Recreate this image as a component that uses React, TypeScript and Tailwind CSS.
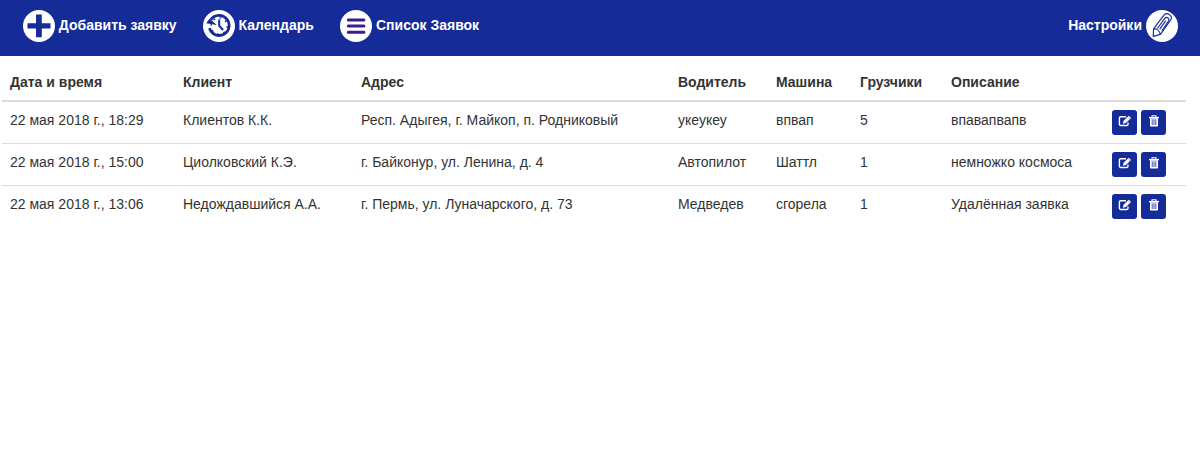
import React from "react";

const BLUE = "#152b98";

function PlusIcon() {
  return (
    <svg width="32" height="32" viewBox="0 0 32 32" className="shrink-0">
      <circle cx="16" cy="16" r="16" fill="#fff" />
      <path d="M13 4.5h5.8v8.7h8.7v5.2h-8.7v8.9H13v-8.9H4.5v-5.2H13z" fill={BLUE} />
    </svg>
  );
}

function HistoryIcon() {
  return (
    <svg width="32" height="32" viewBox="0 0 32 32" className="shrink-0">
      <circle cx="16" cy="16" r="16" fill="#fff" />
      <path d="M8 9.6A10 10 0 1 1 6.5 18.2" fill="none" stroke={BLUE} strokeWidth="2.8" />
      <path d="M3.2 13.2L6.6 8.4l7.2 6.6z" fill={BLUE} />
      <circle cx="16.2" cy="16" r="8.1" fill="none" stroke={BLUE} strokeWidth="1.3" strokeDasharray="2 4.36" />
      <path d="M16.2 9.6v6.2l3.9 4.2" fill="none" stroke={BLUE} strokeWidth="2" />
    </svg>
  );
}

function ListIcon() {
  return (
    <svg width="32" height="32" viewBox="0 0 32 32" className="shrink-0">
      <circle cx="16" cy="16" r="16" fill="#fff" />
      <path d="M8.3 10.1h15.6M8.3 16.1h15.6M8.3 22.2h15.6" stroke="#3b1c94" strokeWidth="3" strokeLinecap="round" />
    </svg>
  );
}

function ClipIcon() {
  return (
    <svg width="32" height="32" viewBox="0 0 32 32" className="shrink-0">
      <circle cx="16" cy="16" r="16" fill="#fff" />
      <g fill="none" stroke={BLUE} strokeWidth="1.15" strokeLinecap="round" strokeLinejoin="round">
        <path d="M11.8 13.2l6.4-8.4c2.9-3.2 9 1 6.5 5.2L14.4 24.4l-7.2 2 .4-7.6 4.2-5.6" />
        <path d="M7.7 18.9c3.1-.4 5.9 1.8 6.6 5.4" />
        <path d="M16.2 20.3l6.3-9.2c1.5-2.7-2-5-3.9-2.5l-6.9 9.4" />
        <path d="M13.9 18.9l5.6-7.8" />
      </g>
    </svg>
  );
}

function EditIcon() {
  return (
    <svg width="14" height="12" viewBox="0 0 14 12">
      <path d="M8 1.7H2.7a1.3 1.3 0 0 0-1.3 1.3v6.2a1.3 1.3 0 0 0 1.3 1.3h6a1.3 1.3 0 0 0 1.3-1.3V7.6" fill="none" stroke="#fff" strokeWidth="1.4" />
      <path d="M4.8 8.8l.8-3L10.7.8l2.4 2.3-5.2 5z" fill="#fff" />
      <path d="M9.7 1.9l2.3 2.3" stroke={BLUE} strokeWidth=".35" />
    </svg>
  );
}

function TrashIcon() {
  return (
    <svg width="12" height="12" viewBox="0 0 12 12">
      <path d="M4 2V.8h4V2" fill="none" stroke="#fff" strokeWidth="1.1" />
      <path d="M1 1.9h10v1.4H1z" fill="#fff" />
      <path d="M2 3.3h8v7.4a.7.7 0 0 1-.7.7H2.7a.7.7 0 0 1-.7-.7z" fill="#fff" />
      <path d="M4.2 4.3v5.7M6 4.3v5.7M7.8 4.3v5.7" stroke={BLUE} strokeWidth=".8" />
    </svg>
  );
}

const columns = ["Дата и время", "Клиент", "Адрес", "Водитель", "Машина", "Грузчики", "Описание"];

const rows = [
  ["22 мая 2018 г., 18:29", "Клиентов К.К.", "Респ. Адыгея, г. Майкоп, п. Родниковый", "укеукеу", "впвап", "5", "впавапвапв"],
  ["22 мая 2018 г., 15:00", "Циолковский К.Э.", "г. Байконур, ул. Ленина, д. 4", "Автопилот", "Шаттл", "1", "немножко космоса"],
  ["22 мая 2018 г., 13:06", "Недождавшийся А.А.", "г. Пермь, ул. Луначарского, д. 73", "Медведев", "сгорела", "1", "Удалённая заявка"],
];

const grid = "grid grid-cols-[173px_178px_317px_98px_84px_91px_161px_82px]";

function ActionButton({ label, children }: { label: string; children: React.ReactNode }) {
  return (
    <button aria-label={label} className="flex h-[25px] w-[25px] items-center justify-center rounded-[3px] bg-[#152b98] pb-[3px]">
      {children}
    </button>
  );
}

export default function App() {
  return (
    <div className="min-h-[450px] bg-white font-['Liberation_Sans',Arial,sans-serif] text-sm leading-5 text-[#333]">
      <nav className="flex h-14 items-start bg-[#152b98] pt-2.5 pr-[22px] pl-[23px] font-bold text-white">
        <a className="flex w-[180px] gap-[3.8px] whitespace-nowrap">
          <PlusIcon />
          <span className="pt-[5px]">Добавить заявку</span>
        </a>
        <a className="flex w-[137px] gap-[3.6px] whitespace-nowrap">
          <HistoryIcon />
          <span className="pt-[5px]">Календарь</span>
        </a>
        <a className="flex gap-1 whitespace-nowrap">
          <ListIcon />
          <span className="pt-[5px]">Список Заявок</span>
        </a>
        <a className="ml-auto flex gap-1 whitespace-nowrap">
          <span className="pt-[5px]">Настройки</span>
          <ClipIcon />
        </a>
      </nav>

      <div className="ml-0.5 w-[1184px]">
        <div className={`${grid} h-[46px] border-b-2 border-[#ddd] font-bold`}>
          {columns.map((c) => (
            <div key={c} className="px-2 pt-4 whitespace-nowrap">{c}</div>
          ))}
        </div>
        {rows.map((row, r) => (
          <div key={r} className={`${grid} h-[42px] border-b border-[#ddd] last:border-transparent`}>
            {row.map((cell, i) => (
              <div key={i} className="px-2 pt-2 whitespace-nowrap">{cell}</div>
            ))}
            <div className="flex gap-1 px-2 pt-2">
              <ActionButton label="Изменить"><EditIcon /></ActionButton>
              <ActionButton label="Удалить"><TrashIcon /></ActionButton>
            </div>
          </div>
        ))}
      </div>
    </div>
  );
}
